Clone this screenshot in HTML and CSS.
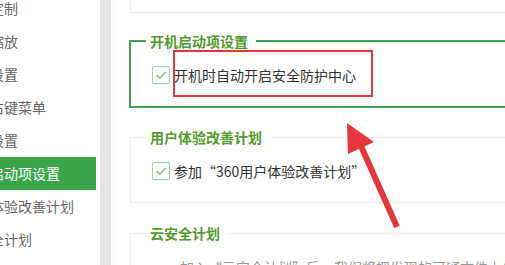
FILE: index.html
```html
<!DOCTYPE html>
<html lang="zh-CN">
<head>
  <meta charset="UTF-8">
  <meta name="viewport" content="width=device-width, initial-scale=1.0">
  <title>设置</title>
  <link rel="stylesheet" href="styles.css">
</head>
<body>
  <div class="page">
    <ul class="sidebar">
      <li>功能定制</li>
      <li>界面缩放</li>
      <li>提示设置</li>
      <li>系统右键菜单</li>
      <li>升级设置</li>
      <li class="active">开机启动项设置</li>
      <li>用户体验改善计划</li>
      <li>云安全计划</li>
    </ul>
    <div class="scrollbar"></div>
    <div class="content">
      <div class="box-prev"></div>

      <fieldset class="group group-active">
        <legend>开机启动项设置</legend>
        <label class="check-row">
          <span class="checkbox">
            <svg width="18" height="18" viewBox="0 0 18 18"><polyline points="4.5,9.2 7.8,12.2 13.6,5.8" fill="none" stroke="#74c994" stroke-width="1.6"/></svg>
          </span>
          开机时自动开启安全防护中心
        </label>
      </fieldset>

      <fieldset class="group">
        <legend>用户体验改善计划</legend>
        <label class="check-row">
          <span class="checkbox">
            <svg width="18" height="18" viewBox="0 0 18 18"><polyline points="4.5,9.2 7.8,12.2 13.6,5.8" fill="none" stroke="#74c994" stroke-width="1.6"/></svg>
          </span>
          参加“360用户体验改善计划”
        </label>
      </fieldset>

      <fieldset class="group">
        <legend>云安全计划</legend>
        <p class="desc">加入“云安全计划”后，我们将把发现的可疑文件上传到云端进行分析。</p>
      </fieldset>
    </div>

    <!-- annotation drawn over the screenshot -->
    <svg class="marks" width="505" height="265" viewBox="0 0 505 265">
      <rect x="174" y="51" width="198" height="45" fill="none" stroke="#e3393d" stroke-width="2"/>
      <line x1="361" y1="146" x2="397" y2="227" stroke="#e8373c" stroke-width="6"/>
      <polygon points="347,123 374,142 348,154" fill="#e8373c"/>
    </svg>
  </div>
</body>
</html>
```

FILE: styles.css
```css
body {
  margin: 0;
  background: #fff;
  font-family: "Noto Sans CJK SC", "Microsoft YaHei", sans-serif;
  font-size: 14px;
  color: #333;
}

.page {
  position: relative;
  display: flex;
  width: 505px;
  height: 265px;
  overflow: hidden;
}

.sidebar {
  list-style: none;
  margin: -8px 0 0 -38px;
  padding: 0;
  width: 134px;
  flex-shrink: 0;
}

.sidebar li {
  height: 33px;
  line-height: 33px;
  color: #666;
  white-space: nowrap;
}

.sidebar li.active {
  background-color: #3ca54c;
  color: #fff;
}

.scrollbar {
  width: 11px;
  margin-left: 4px;
  background-color: #e4e4e4;
  flex-shrink: 0;
}

.content {
  flex: 1;
  margin-left: 2px;
  padding-left: 15px;
  border-left: 1px solid #f2f2f2;
}

.box-prev {
  height: 12px;
  margin-left: 1px;
  border: 1px solid #ececec;
  border-top: none;
  border-right: none;
}

.group {
  margin: 20px 0 0 1px;
  padding: 14px 0 21px 21px;
  border: 1px solid #ececec;
  border-right: none;
  min-inline-size: 0;
}

.group legend {
  margin-left: -6px;
  padding: 0 8px 0 4px;
  line-height: 20px;
  font-weight: bold;
  color: #4f9b2e;
}

.group-active {
  margin: 18px 0 0 0;
  border: 2px solid #43a04e;
  border-right: none;
}

.group + .group:not(.group-active) {
  margin-top: 19px;
}

.group + .group + .group {
  margin-top: 20px;
}

.check-row {
  display: flex;
  align-items: center;
  height: 20px;
  white-space: nowrap;
}

.checkbox {
  width: 18px;
  height: 18px;
  margin-right: 4px;
  box-sizing: border-box;
  border: 1.5px solid #8cd8a8;
  border-radius: 2px;
  display: flex;
  align-items: center;
  justify-content: center;
}

.checkbox svg {
  flex-shrink: 0;
}

.desc {
  margin: 0;
  line-height: 20px;
  text-indent: 2em;
  color: #999;
  white-space: nowrap;
}

.marks {
  position: absolute;
  left: 0;
  top: 0;
  pointer-events: none;
}
```
